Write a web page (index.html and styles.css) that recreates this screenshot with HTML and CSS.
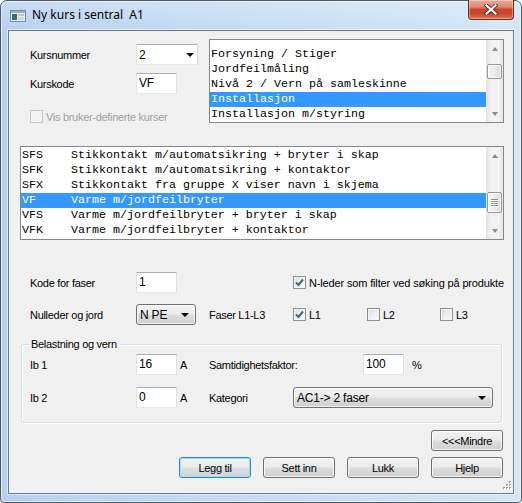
FILE: index.html
```html
<!DOCTYPE html>
<html lang="no">
<head>
<meta charset="utf-8">
<title>Ny kurs i sentral A1</title>
<link rel="stylesheet" href="styles.css">
</head>
<body>
<div class="window">
  <div class="titlebar">
    <svg class="app-icon" width="16" height="16" viewBox="0 0 16 16">
      <rect x="0.5" y="2.5" width="15" height="11" fill="#e8ecef" stroke="#7d8a96"/>
      <rect x="1" y="3" width="14" height="2" fill="#9fb2c4"/>
      <rect x="2" y="6" width="5" height="6" fill="#2f6f7a"/>
      <rect x="8" y="6" width="6" height="2" fill="#b9c4cc"/>
      <rect x="8" y="9" width="6" height="3" fill="#cfd8de"/>
    </svg>
    <span class="title">Ny kurs i sentral&nbsp; A1</span>
    <div class="close-btn">
      <svg width="14" height="11" viewBox="0 0 14 11">
        <path d="M2.5 1.5 L11.5 9.5 M11.5 1.5 L2.5 9.5" stroke="#5a2a20" stroke-width="4" stroke-linecap="square"/>
        <path d="M2.5 1.5 L11.5 9.5 M11.5 1.5 L2.5 9.5" stroke="#ffffff" stroke-width="2.2" stroke-linecap="square"/>
      </svg>
    </div>
  </div>

  <div class="client">
    <div class="top">
      <div class="top-left">
        <div class="form-grid">
          <span class="lbl">Kursnummer</span>
          <div class="combo edit w62"><span>2</span><i class="arrow"></i></div>
          <span class="lbl">Kurskode</span>
          <div class="textbox w41">VF</div>
        </div>
        <div class="check disabled"><span class="box"></span><span>Vis bruker-definerte kurser</span></div>
      </div>

      <div class="listbox top-list">
        <div class="items">
          <div class="row">Forsyning / Stiger</div>
          <div class="row">Jordfeilmåling</div>
          <div class="row">Nivå 2 / Vern på samleskinne</div>
          <div class="row sel">Installasjon</div>
          <div class="row">Installasjon m/styring</div>
        </div>
        <div class="vscroll">
          <div class="sbtn"><i class="up"></i></div>
          <div class="track"><div class="thumb t-top"></div></div>
          <div class="sbtn"><i class="down"></i></div>
        </div>
      </div>
    </div>

    <div class="listbox main-list">
      <div class="items">
        <div class="row">SFS    Stikkontakt m/automatsikring + bryter i skap</div>
        <div class="row">SFK    Stikkontakt m/automatsikring + kontaktor</div>
        <div class="row">SFX    Stikkontakt fra gruppe X viser navn i skjema</div>
        <div class="row sel">VF     Varme m/jordfeilbryter</div>
        <div class="row">VFS    Varme m/jordfeilbryter + bryter i skap</div>
        <div class="row">VFK    Varme m/jordfeilbryter + kontaktor</div>
      </div>
      <div class="vscroll">
        <div class="sbtn"><i class="up"></i></div>
        <div class="track"><div class="thumb t-main"><i></i><i></i><i></i><i></i></div></div>
        <div class="sbtn"><i class="down"></i></div>
      </div>
    </div>

    <div class="opts">
      <span class="lbl">Kode for faser</span>
      <div class="textbox w41">1</div>
      <div class="check checked span-rest"><span class="box"><svg width="11" height="11" viewBox="0 0 11 11"><path d="M2 5.5 L4.5 8 L9 2.5" fill="none" stroke="#4a5f87" stroke-width="2"/></svg></span><span>N-leder som filter ved søking på produkter</span></div>

      <span class="lbl">Nulleder og jord</span>
      <div class="combo list w60"><span>N PE</span><i class="arrow"></i></div>
      <span class="lbl">Faser L1-L3</span>
      <div class="check checked"><span class="box"><svg width="11" height="11" viewBox="0 0 11 11"><path d="M2 5.5 L4.5 8 L9 2.5" fill="none" stroke="#4a5f87" stroke-width="2"/></svg></span><span>L1</span></div>
      <div class="check"><span class="box"></span><span>L2</span></div>
      <div class="check"><span class="box"></span><span>L3</span></div>
    </div>

    <fieldset class="group">
      <legend>Belastning og vern</legend>
      <div class="group-grid">
        <span class="lbl">Ib 1</span>
        <div class="textbox w41">16</div>
        <span class="unit">A</span>
        <span class="lbl">Samtidighetsfaktor:</span>
        <span></span>
        <div class="textbox w41">100</div>
        <span class="unit pct">%</span>

        <span class="lbl">Ib 2</span>
        <div class="textbox w41">0</div>
        <span class="unit">A</span>
        <span class="lbl">Kategori</span>
        <div class="combo list wide"><span>AC1-&gt; 2 faser</span><i class="arrow"></i></div>
      </div>
    </fieldset>

    <div class="buttons">
      <div class="btn-row"><button class="btn">&lt;&lt;&lt;Mindre</button></div>
      <div class="btn-row">
        <button class="btn default">Legg til</button>
        <button class="btn">Sett inn</button>
        <button class="btn">Lukk</button>
        <button class="btn">Hjelp</button>
      </div>
    </div>

    <svg class="grip" width="11" height="11" viewBox="0 0 11 11">
      <g fill="#a0a0a0">
        <rect x="8" y="0" width="2" height="2"/>
        <rect x="5" y="3" width="2" height="2"/><rect x="8" y="3" width="2" height="2"/>
        <rect x="2" y="6" width="2" height="2"/><rect x="5" y="6" width="2" height="2"/><rect x="8" y="6" width="2" height="2"/>
      </g>
      <g fill="#ffffff">
        <rect x="9" y="1" width="1" height="1"/>
        <rect x="6" y="4" width="1" height="1"/><rect x="9" y="4" width="1" height="1"/>
        <rect x="3" y="7" width="1" height="1"/><rect x="6" y="7" width="1" height="1"/><rect x="9" y="7" width="1" height="1"/>
      </g>
    </svg>
  </div>
</div>
</body>
</html>
```

FILE: styles.css
```css
* { box-sizing: border-box; }

html, body {
  margin: 0;
  padding: 0;
  background: #ffffff;
}

body {
  width: 522px;
  height: 503px;
  overflow: hidden;
  font-family: "Liberation Sans", Arial, sans-serif;
  font-size: 11px;
  letter-spacing: -0.3px;
  color: #000;
}

.window {
  width: 522px;
  height: 503px;
  border: 1px solid #4e5a66;
  border-radius: 7px 7px 4px 4px;
  background:
    linear-gradient(180deg, rgba(255,255,255,0.25) 0, rgba(255,255,255,0) 30px),
    linear-gradient(90deg, #b7d1ee 0%, #c6dcf3 50%, #d3e5f7 100%);
  display: flex;
  flex-direction: column;
  box-shadow: inset 0 0 0 1px rgba(255,255,255,0.55);
}

/* ---------- title bar ---------- */
.titlebar {
  height: 29px;
  flex: none;
  display: flex;
  align-items: flex-start;
  padding-left: 9px;
}

.app-icon {
  margin-top: 7px;
  flex: none;
}

.title {
  margin-left: 6px;
  margin-top: 6px;
  font-family: "Noto Sans", "Liberation Sans", sans-serif;
  font-size: 12px;
  letter-spacing: 0;
  color: #000;
  line-height: 16px;
}

.close-btn {
  margin-left: auto;
  margin-right: 7px;
  margin-top: -1px;
  width: 46px;
  height: 20px;
  border: 1px solid #6b2a1d;
  border-top: none;
  border-radius: 0 0 4px 4px;
  background: linear-gradient(180deg, #e9a99b 0%, #dd8a77 35%, #c9452c 50%, #c8432b 70%, #d87a4f 100%);
  box-shadow: inset 0 0 0 1px rgba(255,255,255,0.35);
  display: flex;
  align-items: center;
  justify-content: center;
}

/* ---------- client area ---------- */
.client {
  position: relative;
  flex: 1;
  margin: 0 7px 8px 7px;
  border: 1px solid #6b7a8c;
  background: #f0f0f0;
  padding: 8px 9px 0 11px;
  display: flex;
  flex-direction: column;
  box-shadow: 0 0 0 1px rgba(255,255,255,0.5);
}

.lbl {
  white-space: nowrap;
}

/* ---------- top section ---------- */
.top {
  display: flex;
  height: 84px;
}

.top-left {
  width: 189px;
  padding: 5px 0 0 10px;
}

.form-grid {
  display: grid;
  grid-template-columns: 106px auto;
  row-gap: 8px;
  align-items: center;
}

.top-left .check {
  margin-top: 16px;
}

/* ---------- controls ---------- */
.textbox {
  height: 21px;
  background: #fff;
  border: 1px solid;
  border-color: #abadb3 #dbdfe6 #e3e9ef #e2e3ea;
  padding: 0 0 0 2px;
  line-height: 18px;
  font-size: 12px;
  letter-spacing: -0.2px;
}

.w41 { width: 41px; }
.w60 { width: 60px; }
.w62 { width: 62px; }
.wide { width: 200px; }

.combo {
  height: 21px;
  display: flex;
  align-items: center;
  justify-content: space-between;
  padding: 0 6px 0 3px;
  font-size: 12px;
  letter-spacing: -0.2px;
}

.combo.edit {
  background: #fff;
  border: 1px solid;
  border-color: #abadb3 #dbdfe6 #e3e9ef #e2e3ea;
  padding-left: 2px;
  padding-right: 3px;
}

.combo.list {
  border: 1px solid #707070;
  border-radius: 3px;
  background: linear-gradient(180deg, #f2f2f2 0%, #ebebeb 48%, #dddddd 52%, #cfcfcf 100%);
  box-shadow: inset 0 0 0 1px rgba(255,255,255,0.7);
}

.arrow {
  width: 0;
  height: 0;
  border-left: 4px solid transparent;
  border-right: 4px solid transparent;
  border-top: 4px solid #000;
}

.check {
  display: flex;
  align-items: center;
  white-space: nowrap;
}

.check .box {
  width: 13px;
  height: 13px;
  flex: none;
  margin-right: 3px;
  border: 1px solid #8e8f8f;
  background: linear-gradient(135deg, #dcdcdc 0%, #f0f0f0 60%, #fbfbfb 100%);
  box-shadow: inset 0 0 0 1px #f4f4f4;
  display: flex;
  align-items: center;
  justify-content: center;
}

.check.disabled {
  color: #a0a0a0;
}

.check.disabled .box {
  border-color: #c6c6c6;
  background: #f4f4f4;
  box-shadow: none;
}

/* ---------- list boxes ---------- */
.listbox {
  display: flex;
  background: #fff;
  border: 1px solid #828790;
  font-family: "Liberation Mono", "Courier New", monospace;
  font-size: 11.67px;
  letter-spacing: 0;
  overflow: hidden;
}

.listbox .items {
  flex: 1;
  overflow: hidden;
}

.row {
  height: 15px;
  line-height: 15px;
  white-space: pre;
  padding-left: 1px;
}

.row.sel {
  background: #3399ff;
  color: #fff;
}

.top-list {
  width: 295px;
  height: 84px;
}

.top-list .items {
  padding-top: 7px;
}

.main-list {
  margin-top: 23px;
  width: 484px;
  height: 94px;
}

.main-list .items {
  padding-top: 1px;
}

.vscroll {
  width: 17px;
  flex: none;
  display: flex;
  flex-direction: column;
  background: linear-gradient(90deg, #e3e3e3 0%, #f2f2f2 30%, #f2f2f2 70%, #e8e8e8 100%);
}

.sbtn {
  height: 17px;
  flex: none;
  display: flex;
  align-items: center;
  justify-content: center;
}

.sbtn .up, .sbtn .down {
  width: 0;
  height: 0;
  border-left: 3.5px solid transparent;
  border-right: 3.5px solid transparent;
}

.sbtn .up { border-bottom: 4px solid #8a8a8a; }
.sbtn .down { border-top: 4px solid #8a8a8a; }

.track {
  flex: 1;
}

.thumb {
  margin: 0 1px;
  border: 1px solid #979797;
  border-radius: 2px;
  background: linear-gradient(90deg, #f3f3f3 0%, #ececec 50%, #d9d9d9 100%);
  box-shadow: inset 0 0 0 1px rgba(255,255,255,0.8);
  display: flex;
  flex-direction: column;
  align-items: center;
  justify-content: center;
  gap: 1px;
}

.t-top {
  margin-top: 7px;
  height: 15px;
}

.t-main {
  margin-top: 28px;
  height: 21px;
}

.t-main i {
  display: block;
  width: 7px;
  height: 1px;
  background: #8f8f8f;
  box-shadow: 0 1px 0 #fff;
}

/* ---------- options ---------- */
.opts {
  margin-top: 32px;
  padding-left: 10px;
  width: 484px;
  display: grid;
  grid-template-columns: 106px 73px 84px 74px 73px 64px;
  row-gap: 11px;
  align-items: center;
  overflow: hidden;
}

.opts .span-rest {
  grid-column: 4 / 7;
  overflow: hidden;
  letter-spacing: -0.15px;
}

/* ---------- group box ---------- */
.group {
  margin: 13px 2px 0 1px;
  padding: 3px 0 14px 0;
  border: 1px solid #d5dfe5;
  border-radius: 3px;
  box-shadow: inset 1px 1px 0 #fff, 1px 1px 0 #fff;
  min-width: 0;
}

.group legend {
  margin-left: 7px;
  padding: 0 2px;
  font-size: 11px;
  line-height: 13px;
}

.group-grid {
  padding-left: 8px;
  display: grid;
  grid-template-columns: 106px 41px 32px 84px 70px 41px auto;
  row-gap: 12px;
  align-items: center;
}

.unit {
  padding-left: 3px;
}

.unit.pct {
  padding-left: 8px;
}

.group-grid .combo.wide {
  grid-column: 5 / 8;
}

/* ---------- buttons ---------- */
.buttons {
  margin-top: 7px;
  display: flex;
  flex-direction: column;
  gap: 6px;
  padding-right: 1px;
}

.btn-row {
  display: flex;
  justify-content: flex-end;
  gap: 12px;
}

.btn {
  width: 72px;
  height: 21px;
  margin: 0;
  padding: 0;
  font-family: "Liberation Sans", Arial, sans-serif;
  font-size: 11px;
  letter-spacing: -0.3px;
  color: #000;
  border: 1px solid #707070;
  border-radius: 3px;
  background: linear-gradient(180deg, #f2f2f2 0%, #ebebeb 48%, #dddddd 52%, #cfcfcf 100%);
  box-shadow: inset 0 0 0 1px rgba(255,255,255,0.75);
}

.btn.default {
  border-color: #3c7fb1;
  box-shadow: inset 0 0 0 1px #9fe0fb;
  background: linear-gradient(180deg, #f0f3f5 0%, #e8ecef 48%, #d9dfe3 52%, #ccd4d9 100%);
}

.grip {
  position: absolute;
  right: 1px;
  bottom: 1px;
}
```
